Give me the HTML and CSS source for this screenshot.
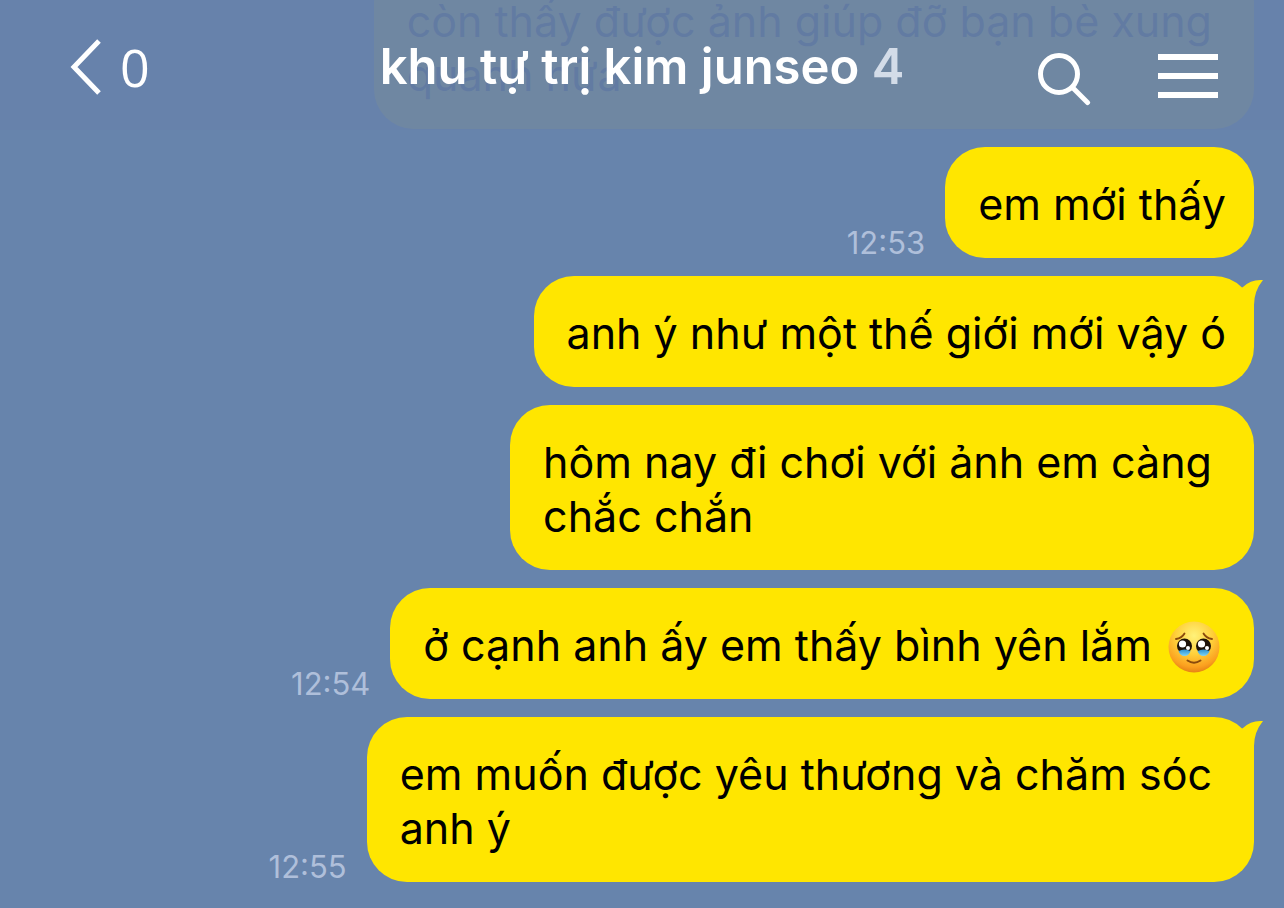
FILE: index.html
```html
<!DOCTYPE html>
<html lang="vi">
<head>
    <meta charset="UTF-8">
    <meta name="viewport" content="width=device-width, initial-scale=1.0">
    <title>khu tự trị kim junseo</title>
    <link rel="stylesheet" href="styles.css">
</head>
<body>

    <!-- Header -->
    <header class="header">
        <a href="#" class="back">
            <svg width="36" height="60" viewBox="0 0 36 60" fill="none" stroke="#fff" stroke-width="5">
                <path d="M33 4 L8 30 L33 56"/>
            </svg>
            <span>0</span>
        </a>
        <h1 class="title">khu tự trị kim junseo <span class="members">4</span></h1>
        <div class="actions">
            <button type="button" aria-label="Tìm kiếm">
                <svg width="56" height="56" viewBox="0 0 56 56" fill="none" stroke="#fff" stroke-width="5">
                    <circle cx="23" cy="24" r="18.5"/>
                    <path d="M36.5 37.5 L51.5 52.5" stroke-linecap="round"/>
                </svg>
            </button>
            <button type="button" aria-label="Menu">
                <svg width="60" height="56" viewBox="0 0 60 56" fill="#fff">
                    <path d="M0 4h60v6H0zM0 23h60v6H0zM0 42h60v6H0z"/>
                </svg>
            </button>
        </div>
    </header>

    <!-- Messages -->
    <main class="chat">
        <div class="message">
            <p class="bubble wrapped">còn thấy được ảnh giúp đỡ bạn bè xung<br>quanh nữa</p>
        </div>
        <div class="message">
            <time class="time">12:53</time>
            <p class="bubble">em mới thấy</p>
        </div>
        <div class="message">
            <p class="bubble">
                anh ý như một thế giới mới vậy ó
                <svg class="tail" width="26" height="44" viewBox="0 0 26 44"><path d="M0 14 L5 11 Q13 3 25 4 Q16 15 16 29 V42 L0 42z"/></svg>
            </p>
        </div>
        <div class="message">
            <p class="bubble wrapped">hôm nay đi chơi với ảnh em càng<br>chắc chắn</p>
        </div>
        <div class="message">
            <time class="time">12:54</time>
            <p class="bubble">
                ở cạnh anh ấy em thấy bình yên lắm
                <svg class="emoji" width="52" height="52" viewBox="0 0 52 52" role="img" aria-label="🥹">
                    <defs>
                        <radialGradient id="face" cx="50%" cy="28%" r="72%">
                            <stop offset="0" stop-color="#fff27a"/>
                            <stop offset="0.5" stop-color="#ffd03a"/>
                            <stop offset="0.85" stop-color="#fba01f"/>
                            <stop offset="1" stop-color="#e68216"/>
                        </radialGradient>
                        <linearGradient id="tear" x1="0" y1="0" x2="0" y2="1">
                            <stop offset="0" stop-color="#2b8fd0"/>
                            <stop offset="1" stop-color="#7fd6f5"/>
                        </linearGradient>
                    </defs>
                    <circle cx="26" cy="26" r="25.5" fill="url(#face)"/>
                    <g fill="none" stroke="#8a4a0c" stroke-width="1.8" stroke-linecap="round">
                        <path d="M8 18 Q14 17 16.5 12.5"/>
                        <path d="M44 18 Q38 17 35.5 12.5"/>
                        <path d="M19.5 39.5 Q26 44 32.5 39.5" stroke-width="2"/>
                    </g>
                    <circle cx="16.5" cy="25" r="7.5" fill="#1e1208"/>
                    <circle cx="35.5" cy="25" r="7.5" fill="#1e1208"/>
                    <path d="M10.5 30 Q16.500 27 22.500 30 Q21 35 16.500 35 Q12 35 10.500 30z" fill="url(#tear)"/>
                    <path d="M29.500 30 Q35.500 27 41.500 30 Q40 35 35.500 35 Q31 35 29.500 30z" fill="url(#tear)"/>
                    <g fill="#fff">
                        <circle cx="14.5" cy="23" r="3.6"/>
                        <circle cx="33.5" cy="23" r="3.6"/>
                        <circle cx="20" cy="27" r="2"/>
                        <circle cx="39" cy="27" r="2"/>
                    </g>
                </svg>
            </p>
        </div>
        <div class="message">
            <time class="time">12:55</time>
            <p class="bubble wrapped">
                em muốn được yêu thương và chăm sóc<br>anh ý
                <svg class="tail" width="26" height="44" viewBox="0 0 26 44"><path d="M0 14 L5 11 Q13 3 25 4 Q16 15 16 29 V42 L0 42z"/></svg>
            </p>
        </div>
    </main>

</body>
</html>
```
FILE: styles.css
```css
* {
    box-sizing: border-box;
}

body {
    font-family: Inter, "Noto Sans", sans-serif;
    margin: 0;
    background-color: #6784ac;
    height: 100vh;
    overflow: hidden;
}

/* the header lies over the scrolled messages */
.header {
    position: fixed;
    top: 0;
    left: 0;
    right: 0;
    z-index: 1;
    display: grid;
    grid-template-columns: 1fr auto 1fr;
    align-items: center;
    height: 130px;
    padding: 4px 66px 0 66px;
    background-color: rgba(103, 130, 171, 0.95);
    color: #fff;
}

.back {
    display: flex;
    align-items: center;
    gap: 18px;
    color: #fff;
    font-family: "Open Sans", sans-serif;
    font-size: 52px;
    line-height: 60px;
    text-decoration: none;
}

.title {
    margin: 0;
    font-size: 49px;
    font-weight: 600;
    line-height: 60px;
    white-space: nowrap;
}

.members {
    color: #d3dce8;
}

.actions {
    display: flex;
    justify-content: flex-end;
    gap: 66px;
    padding-top: 22px;
}

.actions button {
    display: flex;
    padding: 0;
    border: none;
    background: none;
    cursor: pointer;
}

.chat {
    display: flex;
    flex-direction: column;
    justify-content: flex-end;
    gap: 18px;
    height: 100%;
    padding: 0 30px 26px 30px;
}

.message {
    display: flex;
    justify-content: flex-end;
    align-items: flex-end;
    gap: 20px;
}

.time {
    color: #afbfda;
    font-size: 31px;
    line-height: 30px;
}

.bubble {
    position: relative;
    margin: 0;
    padding: 30px 28px 27px 33px;
    border-radius: 40px;
    background-color: #ffe600;
    color: #000;
    font-size: 43px;
    line-height: 54px;
    white-space: nowrap;
}

.wrapped {
    padding-right: 42px;
}

.tail {
    position: absolute;
    top: 0;
    right: -10px;
    fill: #ffe600;
}

.emoji {
    margin: -6px 6px -2px 4px;
    vertical-align: middle;
}
```
